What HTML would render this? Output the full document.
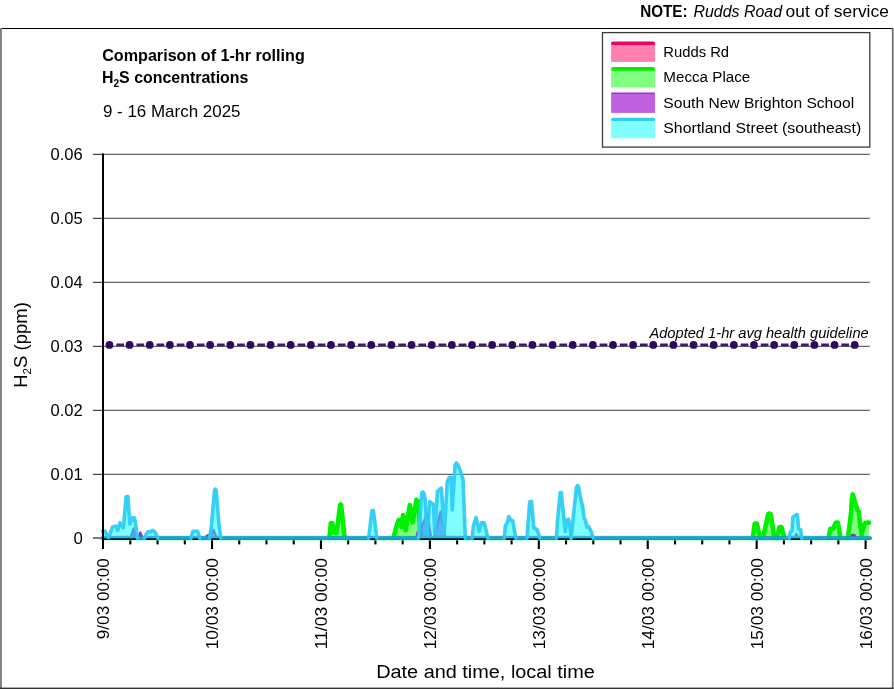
<!DOCTYPE html>
<html lang="en"><head><meta charset="utf-8"><title>Comparison of 1-hr rolling H2S concentrations</title>
<style>
html,body{margin:0;padding:0;background:#fff;}
body{width:894px;height:689px;overflow:hidden;}
svg{display:block;will-change:transform;font-family:"Liberation Sans",sans-serif;fill:#000;}
</style></head><body>
<svg width="894" height="689" viewBox="0 0 894 689">
<rect x="0" y="0" width="894" height="689" fill="#fff"/>

<g shape-rendering="crispEdges">
<rect x="0" y="28" width="893" height="1" fill="#000"/>
</g>
<rect x="0" y="28" width="1.9" height="661" fill="#808080"/>
<rect x="891.9" y="28.5" width="1.7" height="660.5" fill="#6a6a6a"/>
<rect x="0" y="687.6" width="893.6" height="1.4" fill="#333"/>
<text x="640.2" y="17.4" font-size="16" textLength="47.4" lengthAdjust="spacingAndGlyphs" font-weight="bold">NOTE:</text>
<text x="693.5" y="17.4" font-size="16" textLength="88.6" lengthAdjust="spacingAndGlyphs" font-style="italic">Rudds Road</text>
<text x="785.6" y="17.4" font-size="16" textLength="103.2" lengthAdjust="spacingAndGlyphs">out of service</text>
<text x="102.2" y="60.5" font-size="15.8" textLength="202.6" lengthAdjust="spacingAndGlyphs" font-weight="bold">Comparison of 1-hr rolling</text>
<text x="102" y="83.3" font-size="15.8" font-weight="bold" textLength="146.4" lengthAdjust="spacingAndGlyphs">H<tspan font-size="10" dy="3.6">2</tspan><tspan dy="-3.6">S concentrations</tspan></text>
<text x="102.9" y="117.3" font-size="16.6" textLength="137.6" lengthAdjust="spacingAndGlyphs">9 - 16 March 2025</text>
<line x1="103" y1="154.4" x2="869.8" y2="154.4" stroke="#666" stroke-width="1.3"/>
<line x1="93" y1="154.4" x2="103" y2="154.4" stroke="#4a4a4a" stroke-width="1.3"/>
<line x1="103" y1="218.4" x2="869.8" y2="218.4" stroke="#666" stroke-width="1.3"/>
<line x1="93" y1="218.4" x2="103" y2="218.4" stroke="#4a4a4a" stroke-width="1.3"/>
<line x1="103" y1="282.4" x2="869.8" y2="282.4" stroke="#666" stroke-width="1.3"/>
<line x1="93" y1="282.4" x2="103" y2="282.4" stroke="#4a4a4a" stroke-width="1.3"/>
<line x1="103" y1="346.4" x2="869.8" y2="346.4" stroke="#666" stroke-width="1.3"/>
<line x1="93" y1="346.4" x2="103" y2="346.4" stroke="#4a4a4a" stroke-width="1.3"/>
<line x1="103" y1="410.4" x2="869.8" y2="410.4" stroke="#666" stroke-width="1.3"/>
<line x1="93" y1="410.4" x2="103" y2="410.4" stroke="#4a4a4a" stroke-width="1.3"/>
<line x1="103" y1="474.4" x2="869.8" y2="474.4" stroke="#666" stroke-width="1.3"/>
<line x1="93" y1="474.4" x2="103" y2="474.4" stroke="#4a4a4a" stroke-width="1.3"/>
<line x1="103" y1="538.4" x2="869.8" y2="538.4" stroke="#666" stroke-width="1.3"/>
<rect x="93" y="537" width="10" height="2" fill="#7a7a7a"/>
<text x="50.5" y="160.4" font-size="16.7" textLength="32.2" lengthAdjust="spacingAndGlyphs">0.06</text>
<text x="50.5" y="224.4" font-size="16.7" textLength="32.2" lengthAdjust="spacingAndGlyphs">0.05</text>
<text x="50.5" y="288.4" font-size="16.7" textLength="32.2" lengthAdjust="spacingAndGlyphs">0.04</text>
<text x="50.5" y="352.4" font-size="16.7" textLength="32.2" lengthAdjust="spacingAndGlyphs">0.03</text>
<text x="50.5" y="416.4" font-size="16.7" textLength="32.2" lengthAdjust="spacingAndGlyphs">0.02</text>
<text x="50.5" y="480.4" font-size="16.7" textLength="32.2" lengthAdjust="spacingAndGlyphs">0.01</text>
<text x="82.7" y="544.4" font-size="16.7" text-anchor="end">0</text>
<rect x="129.28" y="538" width="2.1" height="6.4" fill="#000"/>
<rect x="156.51" y="538" width="2.1" height="6.4" fill="#000"/>
<rect x="183.75" y="538" width="2.1" height="6.4" fill="#000"/>
<rect x="210.98" y="538" width="2.1" height="11" fill="#000"/>
<rect x="238.21" y="538" width="2.1" height="6.4" fill="#000"/>
<rect x="265.45" y="538" width="2.1" height="6.4" fill="#000"/>
<rect x="292.68" y="538" width="2.1" height="6.4" fill="#000"/>
<rect x="319.91" y="538" width="2.1" height="11" fill="#000"/>
<rect x="347.14" y="538" width="2.1" height="6.4" fill="#000"/>
<rect x="374.38" y="538" width="2.1" height="6.4" fill="#000"/>
<rect x="401.61" y="538" width="2.1" height="6.4" fill="#000"/>
<rect x="428.84" y="538" width="2.1" height="11" fill="#000"/>
<rect x="456.07" y="538" width="2.1" height="6.4" fill="#000"/>
<rect x="483.31" y="538" width="2.1" height="6.4" fill="#000"/>
<rect x="510.54" y="538" width="2.1" height="6.4" fill="#000"/>
<rect x="537.77" y="538" width="2.1" height="11" fill="#000"/>
<rect x="565.00" y="538" width="2.1" height="6.4" fill="#000"/>
<rect x="592.24" y="538" width="2.1" height="6.4" fill="#000"/>
<rect x="619.47" y="538" width="2.1" height="6.4" fill="#000"/>
<rect x="646.70" y="538" width="2.1" height="11" fill="#000"/>
<rect x="673.93" y="538" width="2.1" height="6.4" fill="#000"/>
<rect x="701.17" y="538" width="2.1" height="6.4" fill="#000"/>
<rect x="728.40" y="538" width="2.1" height="6.4" fill="#000"/>
<rect x="755.63" y="538" width="2.1" height="11" fill="#000"/>
<rect x="782.86" y="538" width="2.1" height="6.4" fill="#000"/>
<rect x="810.10" y="538" width="2.1" height="6.4" fill="#000"/>
<rect x="837.33" y="538" width="2.1" height="6.4" fill="#000"/>
<rect x="864.56" y="538" width="2.1" height="11" fill="#000"/>
<text x="109.0" y="639.2" font-size="16.7" textLength="81.1" lengthAdjust="spacingAndGlyphs" transform="rotate(-90 109.0 639.2)">9/03 00:00</text>
<text x="218.0" y="649.3" font-size="16.7" textLength="91.2" lengthAdjust="spacingAndGlyphs" transform="rotate(-90 218.0 649.3)">10/03 00:00</text>
<text x="326.9" y="649.3" font-size="16.7" textLength="91.2" lengthAdjust="spacingAndGlyphs" transform="rotate(-90 326.9 649.3)">11/03 00:00</text>
<text x="435.8" y="649.3" font-size="16.7" textLength="91.2" lengthAdjust="spacingAndGlyphs" transform="rotate(-90 435.8 649.3)">12/03 00:00</text>
<text x="544.8" y="649.3" font-size="16.7" textLength="91.2" lengthAdjust="spacingAndGlyphs" transform="rotate(-90 544.8 649.3)">13/03 00:00</text>
<text x="653.7" y="649.3" font-size="16.7" textLength="91.2" lengthAdjust="spacingAndGlyphs" transform="rotate(-90 653.7 649.3)">14/03 00:00</text>
<text x="762.6" y="649.3" font-size="16.7" textLength="91.2" lengthAdjust="spacingAndGlyphs" transform="rotate(-90 762.6 649.3)">15/03 00:00</text>
<text x="871.6" y="649.3" font-size="16.7" textLength="91.2" lengthAdjust="spacingAndGlyphs" transform="rotate(-90 871.6 649.3)">16/03 00:00</text>
<text x="376.2" y="678" font-size="18" textLength="218.6" lengthAdjust="spacingAndGlyphs">Date and time, local time</text>
<text x="27" y="387.8" font-size="18" transform="rotate(-90 27 387.8)" textLength="85.6" lengthAdjust="spacingAndGlyphs">H<tspan font-size="11.5" dy="4.5">2</tspan><tspan dy="-4.5">S (ppm)</tspan></text>
<g>
<line x1="102.5" y1="538.05" x2="870" y2="538.05" stroke="#7dffb0" stroke-opacity="0.4" stroke-width="6"/>
<polygon points="102.5,537.9 102.5,537.9 329.4,537.9 330.9,523.0 332.2,523.0 334.6,533.0 336.6,533.0 340.2,504.6 341.1,504.6 344.6,537.9 393.5,537.9 396.8,525.0 398.7,520.0 401.3,527.0 403.0,515.0 405.7,530.5 409.8,505.0 412.7,522.5 416.4,499.8 418.0,501.0 421.0,537.9 752.8,537.9 754.8,523.5 756.8,523.5 760.0,537.9 763.0,537.9 768.2,514.3 769.5,513.5 770.8,514.3 774.3,537.9 776.9,537.9 779.5,527.1 781.5,527.1 784.4,537.9 828.6,537.9 830.4,528.8 833.2,528.8 835.6,523.0 836.4,522.6 837.9,522.6 840.5,537.9 847.9,537.9 849.6,525.0 851.2,511.5 852.0,498.0 852.7,494.4 853.6,497.4 855.4,503.7 857.2,509.3 858.9,511.6 859.4,518.0 860.3,525.6 861.8,534.6 863.6,526.0 865.4,522.7 869.0,522.6 869.0,537.9" fill="#00ff00" fill-opacity="0.5" stroke="none"/><polyline points="329.4,537.9 330.9,523.0 332.2,523.0 334.6,533.0 336.6,533.0 340.2,504.6 341.1,504.6 344.6,537.9" fill="none" stroke="#00f000" stroke-opacity="1" stroke-width="4.6" stroke-linejoin="round" stroke-linecap="round"/><polyline points="393.5,537.9 396.8,525.0 398.7,520.0 401.3,527.0 403.0,515.0 405.7,530.5 409.8,505.0 412.7,522.5 416.4,499.8 418.0,501.0 421.0,537.9" fill="none" stroke="#00f000" stroke-opacity="1" stroke-width="4.6" stroke-linejoin="round" stroke-linecap="round"/><polyline points="752.8,537.9 754.8,523.5 756.8,523.5 760.0,537.9" fill="none" stroke="#00f000" stroke-opacity="1" stroke-width="4.6" stroke-linejoin="round" stroke-linecap="round"/><polyline points="763.0,537.9 768.2,514.3 769.5,513.5 770.8,514.3 774.3,537.9" fill="none" stroke="#00f000" stroke-opacity="1" stroke-width="4.6" stroke-linejoin="round" stroke-linecap="round"/><polyline points="776.9,537.9 779.5,527.1 781.5,527.1 784.4,537.9" fill="none" stroke="#00f000" stroke-opacity="1" stroke-width="4.6" stroke-linejoin="round" stroke-linecap="round"/><polyline points="828.6,537.9 830.4,528.8 833.2,528.8 835.6,523.0 836.4,522.6 837.9,522.6 840.5,537.9" fill="none" stroke="#00f000" stroke-opacity="1" stroke-width="4.6" stroke-linejoin="round" stroke-linecap="round"/><polyline points="847.9,537.9 849.6,525.0 851.2,511.5 852.0,498.0 852.7,494.4 853.6,497.4 855.4,503.7 857.2,509.3 858.9,511.6 859.4,518.0 860.3,525.6 861.8,534.6 863.6,526.0 865.4,522.7 869.0,522.6" fill="none" stroke="#00f000" stroke-opacity="1" stroke-width="4.6" stroke-linejoin="round" stroke-linecap="round"/>
<polygon points="102.5,537.9 102.5,537.9 130.5,537.9 133.6,528.5 136.5,537.9 138.2,537.9 140.3,532.3 142.6,537.9 205.0,537.9 207.0,535.5 210.5,534.5 213.5,530.0 217.0,537.9 416.5,537.9 417.5,532.0 420.0,531.0 427.4,512.5 431.2,537.9 434.0,537.9 440.5,511.5 445.5,537.9 794.5,537.9 796.4,534.0 798.5,537.9 851.0,537.9 852.0,534.8 854.5,534.8 855.5,537.9 870.5,537.9 870.5,537.9" fill="#a020d0" fill-opacity="0.7" stroke="none"/><polyline points="130.5,537.9 133.6,528.5 136.5,537.9" fill="none" stroke="#a030c8" stroke-opacity="1" stroke-width="2.2" stroke-linejoin="round" stroke-linecap="round"/><polyline points="138.2,537.9 140.3,532.3 142.6,537.9" fill="none" stroke="#a030c8" stroke-opacity="1" stroke-width="2.2" stroke-linejoin="round" stroke-linecap="round"/><polyline points="205.0,537.9 207.0,535.5 210.5,534.5 213.5,530.0 217.0,537.9" fill="none" stroke="#a030c8" stroke-opacity="1" stroke-width="2.2" stroke-linejoin="round" stroke-linecap="round"/><polyline points="416.5,537.9 417.5,532.0 420.0,531.0 427.4,512.5 431.2,537.9" fill="none" stroke="#a030c8" stroke-opacity="1" stroke-width="2.2" stroke-linejoin="round" stroke-linecap="round"/><polyline points="434.0,537.9 440.5,511.5 445.5,537.9" fill="none" stroke="#a030c8" stroke-opacity="1" stroke-width="2.2" stroke-linejoin="round" stroke-linecap="round"/><polyline points="794.5,537.9 796.4,534.0 798.5,537.9" fill="none" stroke="#a030c8" stroke-opacity="1" stroke-width="2.2" stroke-linejoin="round" stroke-linecap="round"/><polyline points="851.0,537.9 852.0,534.8 854.5,534.8 855.5,537.9" fill="none" stroke="#a030c8" stroke-opacity="1" stroke-width="2.2" stroke-linejoin="round" stroke-linecap="round"/>
<polygon points="102.5,537.9 102.5,531.2 104.8,531.0 108.7,537.5 112.5,527.0 116.0,526.0 117.6,530.5 120.0,522.7 123.4,528.0 126.1,496.8 127.9,496.6 129.9,524.0 132.0,517.7 134.5,517.7 137.5,537.9 144.6,537.9 146.5,533.5 148.3,531.6 150.3,532.0 152.5,530.3 154.5,531.6 156.0,534.0 157.7,537.9 190.9,537.9 192.9,531.3 197.7,531.3 199.6,537.9 209.6,537.9 211.5,525.0 214.5,490.2 215.3,489.2 216.1,490.2 219.0,525.0 220.8,537.9 368.7,537.9 371.9,510.6 373.4,510.6 376.8,537.9 418.4,537.9 421.8,492.8 422.8,492.0 423.8,493.0 425.0,498.5 427.2,533.5 429.7,501.6 431.5,503.0 433.5,504.2 434.8,533.4 437.5,491.4 439.4,489.4 441.4,488.2 444.3,533.8 447.3,481.5 449.2,477.4 451.2,477.4 452.2,510.0 455.1,465.0 456.4,463.0 457.7,464.2 459.0,467.2 461.0,473.5 463.0,479.0 465.3,537.9 472.2,537.9 473.3,526.4 476.1,517.5 479.2,531.5 481.5,522.8 484.2,522.8 487.9,537.9 504.2,537.9 505.4,525.5 506.9,523.7 508.8,516.6 511.0,520.2 512.8,521.0 515.2,535.5 516.0,537.9 527.0,537.9 529.7,501.8 531.5,501.4 533.8,528.0 537.0,529.4 539.8,537.9 556.4,537.9 557.5,521.0 560.1,492.8 561.3,492.6 563.1,511.0 565.3,531.5 566.7,520.2 568.5,519.2 569.8,525.5 571.2,537.9 573.8,512.0 576.5,487.2 577.6,485.6 578.5,486.6 580.1,495.9 582.8,507.6 584.1,518.2 585.5,520.2 586.8,527.2 588.6,526.4 590.9,530.8 593.2,537.9 789.2,537.9 790.3,532.0 791.9,531.0 793.0,517.0 794.5,516.0 795.9,515.0 797.3,514.6 798.7,528.8 800.7,529.7 801.6,537.9 870.5,537.9 870.5,537.9" fill="#00ffff" fill-opacity="0.5"/>
<line x1="102.3" y1="538.05" x2="870.2" y2="538.05" stroke="#1a8db2" stroke-width="3.8" stroke-linecap="round"/>
<line x1="102.3" y1="538.05" x2="870.2" y2="538.05" stroke="#10a8d4" stroke-width="2.5" stroke-linecap="round"/>
<rect x="102.0" y="535.9" width="34.0" height="2.5" fill="#2bb6dc"/>
<rect x="102.0" y="538.3" width="34.0" height="1.6" fill="#0a0620"/>
<rect x="146.1" y="535.9" width="10.1" height="2.5" fill="#2bb6dc"/>
<rect x="146.1" y="538.3" width="10.1" height="1.6" fill="#0a0620"/>
<rect x="192.4" y="535.9" width="5.7" height="2.5" fill="#2bb6dc"/>
<rect x="192.4" y="538.3" width="5.7" height="1.6" fill="#0a0620"/>
<rect x="211.1" y="535.9" width="8.2" height="2.5" fill="#2bb6dc"/>
<rect x="211.1" y="538.3" width="8.2" height="1.6" fill="#0a0620"/>
<rect x="370.2" y="535.9" width="5.1" height="2.5" fill="#2bb6dc"/>
<rect x="370.2" y="538.3" width="5.1" height="1.6" fill="#0a0620"/>
<rect x="419.9" y="535.9" width="43.9" height="2.5" fill="#2bb6dc"/>
<rect x="419.9" y="538.3" width="43.9" height="1.6" fill="#0a0620"/>
<rect x="473.7" y="535.9" width="12.7" height="2.5" fill="#2bb6dc"/>
<rect x="473.7" y="538.3" width="12.7" height="1.6" fill="#0a0620"/>
<rect x="505.7" y="535.9" width="8.8" height="2.5" fill="#2bb6dc"/>
<rect x="505.7" y="538.3" width="8.8" height="1.6" fill="#0a0620"/>
<rect x="528.5" y="535.9" width="9.8" height="2.5" fill="#2bb6dc"/>
<rect x="528.5" y="538.3" width="9.8" height="1.6" fill="#0a0620"/>
<rect x="557.9" y="535.9" width="11.8" height="2.5" fill="#2bb6dc"/>
<rect x="557.9" y="538.3" width="11.8" height="1.6" fill="#0a0620"/>
<rect x="572.7" y="535.9" width="19.0" height="2.5" fill="#2bb6dc"/>
<rect x="572.7" y="538.3" width="19.0" height="1.6" fill="#0a0620"/>
<rect x="790.7" y="535.9" width="9.4" height="2.5" fill="#2bb6dc"/>
<rect x="790.7" y="538.3" width="9.4" height="1.6" fill="#0a0620"/>
<polyline points="102.5,531.2 104.8,531.0 108.7,537.5 112.5,527.0 116.0,526.0 117.6,530.5 120.0,522.7 123.4,528.0 126.1,496.8 127.9,496.6 129.9,524.0 132.0,517.7 134.5,517.7 137.5,537.9" fill="none" stroke="#2ccbf5" stroke-opacity="0.93" stroke-width="3.6" stroke-linejoin="round" stroke-linecap="round"/>
<polyline points="144.6,537.9 146.5,533.5 148.3,531.6 150.3,532.0 152.5,530.3 154.5,531.6 156.0,534.0 157.7,537.9" fill="none" stroke="#2ccbf5" stroke-opacity="0.93" stroke-width="3.6" stroke-linejoin="round" stroke-linecap="round"/>
<polyline points="190.9,537.9 192.9,531.3 197.7,531.3 199.6,537.9" fill="none" stroke="#2ccbf5" stroke-opacity="0.93" stroke-width="3.6" stroke-linejoin="round" stroke-linecap="round"/>
<polyline points="209.6,537.9 211.5,525.0 214.5,490.2 215.3,489.2 216.1,490.2 219.0,525.0 220.8,537.9" fill="none" stroke="#2ccbf5" stroke-opacity="0.93" stroke-width="3.6" stroke-linejoin="round" stroke-linecap="round"/>
<polyline points="368.7,537.9 371.9,510.6 373.4,510.6 376.8,537.9" fill="none" stroke="#2ccbf5" stroke-opacity="0.93" stroke-width="3.6" stroke-linejoin="round" stroke-linecap="round"/>
<polyline points="418.4,537.9 421.8,492.8 422.8,492.0 423.8,493.0 425.0,498.5 427.2,533.5 429.7,501.6 431.5,503.0 433.5,504.2 434.8,533.4 437.5,491.4 439.4,489.4 441.4,488.2 444.3,533.8 447.3,481.5 449.2,477.4 451.2,477.4 452.2,510.0 455.1,465.0 456.4,463.0 457.7,464.2 459.0,467.2 461.0,473.5 463.0,479.0 465.3,537.9" fill="none" stroke="#2ccbf5" stroke-opacity="0.93" stroke-width="3.6" stroke-linejoin="round" stroke-linecap="round"/>
<polyline points="472.2,537.9 473.3,526.4 476.1,517.5 479.2,531.5 481.5,522.8 484.2,522.8 487.9,537.9" fill="none" stroke="#2ccbf5" stroke-opacity="0.93" stroke-width="3.6" stroke-linejoin="round" stroke-linecap="round"/>
<polyline points="504.2,537.9 505.4,525.5 506.9,523.7 508.8,516.6 511.0,520.2 512.8,521.0 515.2,535.5 516.0,537.9" fill="none" stroke="#2ccbf5" stroke-opacity="0.93" stroke-width="3.6" stroke-linejoin="round" stroke-linecap="round"/>
<polyline points="527.0,537.9 529.7,501.8 531.5,501.4 533.8,528.0 537.0,529.4 539.8,537.9" fill="none" stroke="#2ccbf5" stroke-opacity="0.93" stroke-width="3.6" stroke-linejoin="round" stroke-linecap="round"/>
<polyline points="556.4,537.9 557.5,521.0 560.1,492.8 561.3,492.6 563.1,511.0 565.3,531.5 566.7,520.2 568.5,519.2 569.8,525.5 571.2,537.9" fill="none" stroke="#2ccbf5" stroke-opacity="0.93" stroke-width="3.6" stroke-linejoin="round" stroke-linecap="round"/>
<polyline points="571.2,537.9 573.8,512.0 576.5,487.2 577.6,485.6 578.5,486.6 580.1,495.9 582.8,507.6 584.1,518.2 585.5,520.2 586.8,527.2 588.6,526.4 590.9,530.8 593.2,537.9" fill="none" stroke="#2ccbf5" stroke-opacity="0.93" stroke-width="3.6" stroke-linejoin="round" stroke-linecap="round"/>
<polyline points="789.2,537.9 790.3,532.0 791.9,531.0 793.0,517.0 794.5,516.0 795.9,515.0 797.3,514.6 798.7,528.8 800.7,529.7 801.6,537.9" fill="none" stroke="#2ccbf5" stroke-opacity="0.93" stroke-width="3.6" stroke-linejoin="round" stroke-linecap="round"/>
</g>
<rect x="102" y="153.5" width="2" height="395.5" fill="#000"/>
<line x1="109.4" y1="344.9" x2="855" y2="344.9" stroke="#3a1a6e" stroke-width="2.6" stroke-dasharray="7.7 12.44" stroke-dashoffset="-6.9"/>
<circle cx="109.45" cy="344.9" r="3.9" fill="#2e0a5e"/>
<circle cx="129.59" cy="344.9" r="3.9" fill="#2e0a5e"/>
<circle cx="149.73" cy="344.9" r="3.9" fill="#2e0a5e"/>
<circle cx="169.88" cy="344.9" r="3.9" fill="#2e0a5e"/>
<circle cx="190.02" cy="344.9" r="3.9" fill="#2e0a5e"/>
<circle cx="210.16" cy="344.9" r="3.9" fill="#2e0a5e"/>
<circle cx="230.30" cy="344.9" r="3.9" fill="#2e0a5e"/>
<circle cx="250.44" cy="344.9" r="3.9" fill="#2e0a5e"/>
<circle cx="270.59" cy="344.9" r="3.9" fill="#2e0a5e"/>
<circle cx="290.73" cy="344.9" r="3.9" fill="#2e0a5e"/>
<circle cx="310.87" cy="344.9" r="3.9" fill="#2e0a5e"/>
<circle cx="331.01" cy="344.9" r="3.9" fill="#2e0a5e"/>
<circle cx="351.15" cy="344.9" r="3.9" fill="#2e0a5e"/>
<circle cx="371.29" cy="344.9" r="3.9" fill="#2e0a5e"/>
<circle cx="391.44" cy="344.9" r="3.9" fill="#2e0a5e"/>
<circle cx="411.58" cy="344.9" r="3.9" fill="#2e0a5e"/>
<circle cx="431.72" cy="344.9" r="3.9" fill="#2e0a5e"/>
<circle cx="451.86" cy="344.9" r="3.9" fill="#2e0a5e"/>
<circle cx="472.00" cy="344.9" r="3.9" fill="#2e0a5e"/>
<circle cx="492.15" cy="344.9" r="3.9" fill="#2e0a5e"/>
<circle cx="512.29" cy="344.9" r="3.9" fill="#2e0a5e"/>
<circle cx="532.43" cy="344.9" r="3.9" fill="#2e0a5e"/>
<circle cx="552.57" cy="344.9" r="3.9" fill="#2e0a5e"/>
<circle cx="572.71" cy="344.9" r="3.9" fill="#2e0a5e"/>
<circle cx="592.86" cy="344.9" r="3.9" fill="#2e0a5e"/>
<circle cx="613.00" cy="344.9" r="3.9" fill="#2e0a5e"/>
<circle cx="633.14" cy="344.9" r="3.9" fill="#2e0a5e"/>
<circle cx="653.28" cy="344.9" r="3.9" fill="#2e0a5e"/>
<circle cx="673.42" cy="344.9" r="3.9" fill="#2e0a5e"/>
<circle cx="693.56" cy="344.9" r="3.9" fill="#2e0a5e"/>
<circle cx="713.71" cy="344.9" r="3.9" fill="#2e0a5e"/>
<circle cx="733.85" cy="344.9" r="3.9" fill="#2e0a5e"/>
<circle cx="753.99" cy="344.9" r="3.9" fill="#2e0a5e"/>
<circle cx="774.13" cy="344.9" r="3.9" fill="#2e0a5e"/>
<circle cx="794.27" cy="344.9" r="3.9" fill="#2e0a5e"/>
<circle cx="814.42" cy="344.9" r="3.9" fill="#2e0a5e"/>
<circle cx="834.56" cy="344.9" r="3.9" fill="#2e0a5e"/>
<circle cx="854.70" cy="344.9" r="3.9" fill="#2e0a5e"/>
<text x="649.4" y="337.8" font-size="13.8" textLength="219.3" lengthAdjust="spacingAndGlyphs" font-style="italic">Adopted 1-hr avg health guideline</text>
<rect x="602.5" y="32.6" width="267.3" height="114.5" fill="#fff" stroke="#3a3a3a" stroke-width="1.3"/>
<rect x="611.1" y="42.4" width="43.9" height="19.5" fill="#ff80b0"/>
<line x1="612.90" y1="43.20" x2="653.20" y2="43.20" stroke="#f00060" stroke-width="3.6" stroke-linecap="round"/>
<text x="663.3" y="56.7" font-size="15.1" textLength="65.8" lengthAdjust="spacingAndGlyphs">Rudds Rd</text>
<rect x="611.1" y="67.9" width="43.9" height="19.5" fill="#80ff80"/>
<line x1="613.00" y1="68.80" x2="653.10" y2="68.80" stroke="#00ee00" stroke-width="3.8" stroke-linecap="round"/>
<text x="663.3" y="82.2" font-size="15.1" textLength="87.0" lengthAdjust="spacingAndGlyphs">Mecca Place</text>
<rect x="611.1" y="93.4" width="43.9" height="19.5" fill="#c060e0"/>
<line x1="611.90" y1="93.20" x2="654.20" y2="93.20" stroke="#a030c8" stroke-width="1.6" stroke-linecap="round"/>
<text x="663.3" y="107.7" font-size="15.1" textLength="190.8" lengthAdjust="spacingAndGlyphs">South New Brighton School</text>
<rect x="611.1" y="118.7" width="43.9" height="19.5" fill="#80ffff"/>
<line x1="612.80" y1="119.40" x2="653.30" y2="119.40" stroke="#2ccff8" stroke-width="3.4" stroke-linecap="round"/>
<text x="663.3" y="133.0" font-size="15.1" textLength="197.9" lengthAdjust="spacingAndGlyphs">Shortland Street (southeast)</text>
</svg></body></html>
